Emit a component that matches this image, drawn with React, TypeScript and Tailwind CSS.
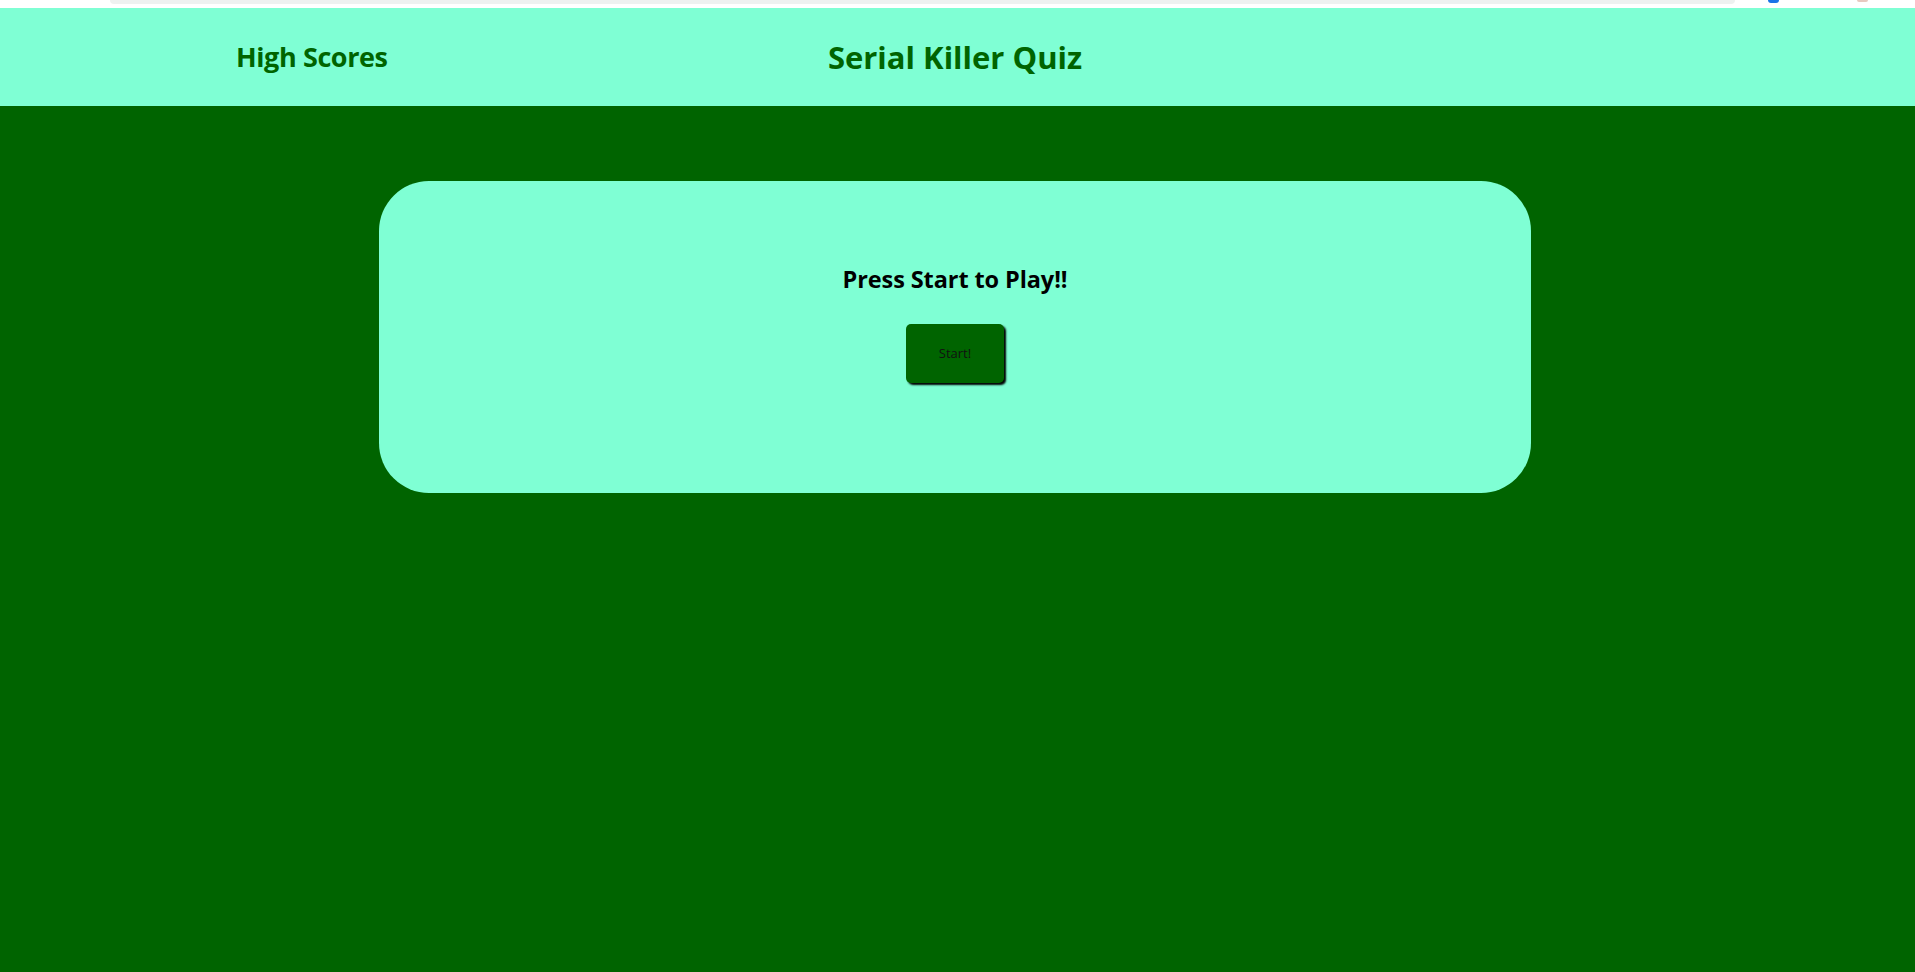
export default function App(): JSX.Element {
  return (
    <div className="min-h-[972px] bg-[#006400] font-['Open_Sans',sans-serif]">
      {/* browser chrome strip left in the screenshot */}
      <div className="h-2 bg-white flex items-start">
        <div className="ml-[110px] w-[1625px] h-1 rounded-b-md bg-[#eef1f0]" />
        <div className="ml-[33px] w-[11px] h-[3px] rounded-b-sm bg-[#1a73e8]" />
        <div className="ml-[78px] w-[11px] h-[2px] rounded-b-sm bg-[#e8c9c0]" />
      </div>

      <header className="h-[98px] pr-[5px] bg-[#7fffd4] grid grid-cols-[1fr_auto_1fr] items-center">
        <a href="#" className="pl-[236px] text-[27px] font-bold text-[#006400] tracking-[-0.4px]">
          High Scores
        </a>
        <h1 className="text-[31px] font-bold text-[#006400]">
          Serial Killer Quiz
        </h1>
        <div />
      </header>

      <main className="pt-[75px] pr-[5px] flex justify-center">
        <div className="w-[1152px] h-[312px] rounded-[50px] bg-[#7fffd4] flex flex-col items-center pt-[81px]">
          <h2 className="text-[23.5px] font-bold text-black tracking-[-0.1px]">
            Press Start to Play!!
          </h2>
          <button className="mt-[27px] w-[98px] h-[59px] rounded-[5px] bg-[#006400] text-[13px] text-[#111] shadow-[2px_2px_2px_#000]">
            Start!
          </button>
        </div>
      </main>
    </div>
  );
}
